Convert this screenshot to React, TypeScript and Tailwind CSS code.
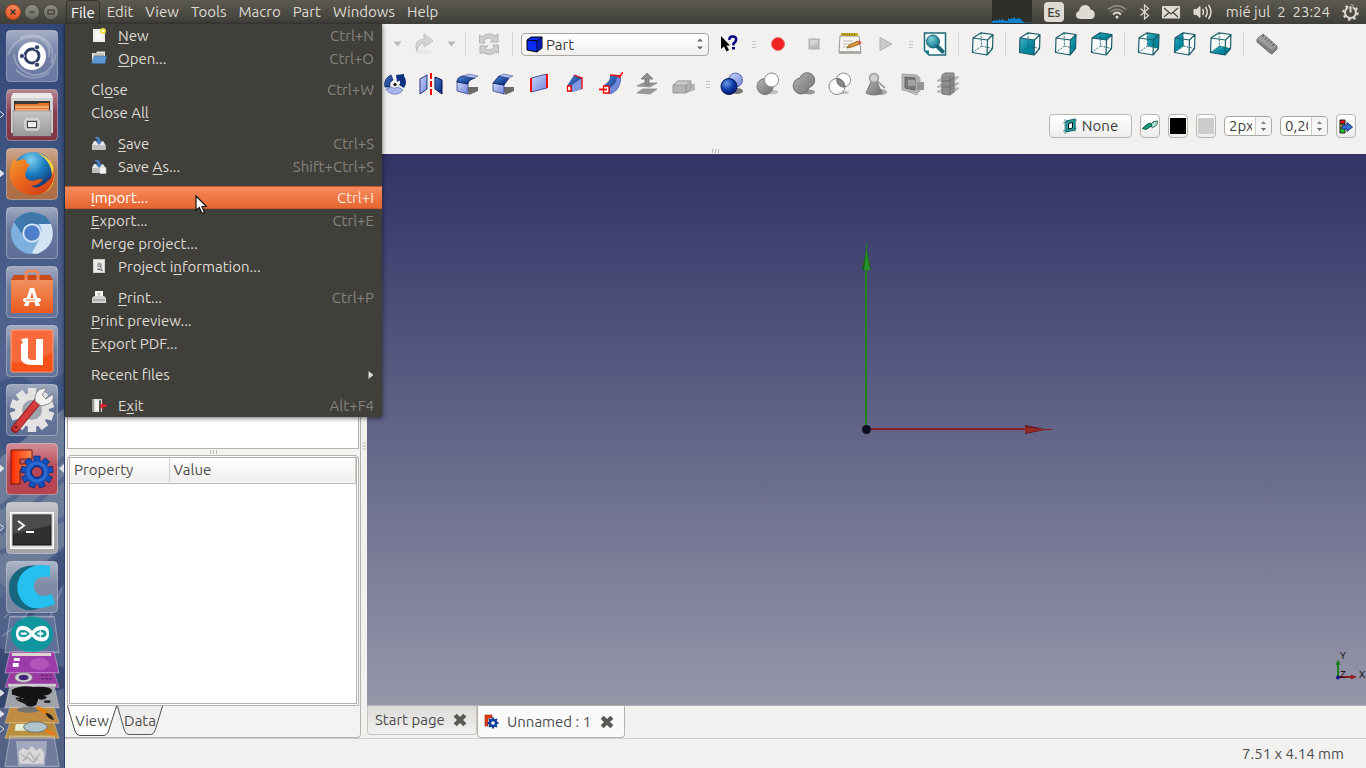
import React from "react";

type Face = "none" | "front" | "right" | "top" | "rear" | "left" | "bottom";

const Defs = () => (
  <svg className="absolute h-0 w-0" aria-hidden="true">
    <defs>
      <linearGradient id="tile" x1="0" y1="0" x2="0" y2="1">
        <stop offset="0" stopColor="#fff" stopOpacity=".42" />
        <stop offset=".45" stopColor="#fff" stopOpacity=".08" />
        <stop offset="1" stopColor="#fff" stopOpacity=".02" />
      </linearGradient>
      <linearGradient id="teal" x1="0" y1="0" x2="1" y2="1">
        <stop offset="0" stopColor="#45b0c0" />
        <stop offset=".6" stopColor="#0088a0" />
        <stop offset="1" stopColor="#00788e" />
      </linearGradient>
      <linearGradient id="blueDark" x1="0" y1="0" x2="1" y2="1">
        <stop offset="0" stopColor="#4f86d0" />
        <stop offset="1" stopColor="#00247c" />
      </linearGradient>
      <linearGradient id="blueLight" x1="0" y1="0" x2="1" y2="1">
        <stop offset="0" stopColor="#cbd6fb" />
        <stop offset="1" stopColor="#7286d8" />
      </linearGradient>
      <linearGradient id="gray" x1="0" y1="0" x2="1" y2="1">
        <stop offset="0" stopColor="#b8b8b8" />
        <stop offset="1" stopColor="#6e6e6e" />
      </linearGradient>
      <linearGradient id="silver" x1="0" y1="0" x2="0" y2="1">
        <stop offset="0" stopColor="#c4c4c4" />
        <stop offset="1" stopColor="#9a9a9a" />
      </linearGradient>
      <linearGradient id="orange" x1="0" y1="0" x2="0" y2="1">
        <stop offset="0" stopColor="#f0925f" />
        <stop offset="1" stopColor="#ec5a1e" />
      </linearGradient>
      <linearGradient id="freecadF" x1="0" y1="0" x2="1" y2="0">
        <stop offset="0" stopColor="#ff2a00" />
        <stop offset="1" stopColor="#ff8e50" />
      </linearGradient>
      <radialGradient id="ballBlue" cx=".35" cy=".3" r=".7">
        <stop offset="0" stopColor="#6c9ae8" />
        <stop offset=".6" stopColor="#0f3ba6" />
        <stop offset="1" stopColor="#001e78" />
      </radialGradient>
      <radialGradient id="globe" cx=".45" cy=".2" r=".8">
        <stop offset="0" stopColor="#7fd0f2" />
        <stop offset=".45" stopColor="#1a7dc0" />
        <stop offset="1" stopColor="#12235e" />
      </radialGradient>
      <linearGradient id="fox" x1="0" y1="0" x2="1" y2="1">
        <stop offset="0" stopColor="#f39a2c" />
        <stop offset=".5" stopColor="#e8601c" />
        <stop offset="1" stopColor="#cf3a12" />
      </linearGradient>
      <radialGradient id="ballTeal" cx=".35" cy=".3" r=".8">
        <stop offset="0" stopColor="#7fd3dc" />
        <stop offset="1" stopColor="#00697e" />
      </radialGradient>
    </defs>
  </svg>
);

/* ---------- launcher ---------- */

const Tile = ({ tint, label, left, right, children }: { tint: string; label: string; left?: "solid" | "open"; right?: boolean; children: React.ReactNode }) => (
  <button type="button" aria-label={label} className="relative flex h-[59px] w-full shrink-0 justify-center">
    <svg width="52" height="52" viewBox="0 0 52 52">
      <rect x=".5" y=".5" width="51" height="51" rx="4" fill={tint} />
      <rect x=".5" y=".5" width="51" height="51" rx="4" fill="url(#tile)" stroke="#fff" strokeOpacity=".35" />
      {children}
    </svg>
    {left && (
      <svg className="absolute left-0 top-5" width="6" height="12" viewBox="0 0 6 12">
        <path d="M-1 1.500 L4 5.500 L-1 9.500Z" fill={left === "solid" ? "#dfe1e6" : "none"} stroke="#dfe1e6" />
      </svg>
    )}
    {right && (
      <svg className="absolute right-0 top-5" width="6" height="12" viewBox="0 0 6 12">
        <path d="M6 1 L1 5.500 L6 10Z" fill="#dfe1e6" />
      </svg>
    )}
  </button>
);

const Gear = ({ cx, cy, r, fill, stroke, hole, holeFill, n = 8 }: { cx: number; cy: number; r: number; fill: string; stroke?: string; hole: number; holeFill: string; n?: number }) => (
  <g>
    {Array.from({ length: n }, (_, i) => (
      <rect key={i} x={cx - r * 0.19} y={cy - r} width={r * 0.38} height={r} fill={fill} stroke={stroke} strokeWidth=".6" transform={`rotate(${(i * 360) / n} ${cx} ${cy})`} />
    ))}
    <circle cx={cx} cy={cy} r={r * 0.77} fill={fill} />
    <circle cx={cx} cy={cy} r={hole} fill={holeFill} stroke={stroke} />
  </g>
);

const Folded = ({ label, h, tint, left, children }: { label: string; h: string; tint: string; left?: "solid" | "open"; children: React.ReactNode }) => (
  <button type="button" aria-label={label} className={`relative w-full shrink-0 ${h}`}>
    <svg className="h-full w-full overflow-visible" viewBox="0 0 65 20" preserveAspectRatio="none">
      <path d="M10 -2 L55 -2 L60 19 L5 19Z" fill={tint} stroke="#fff" strokeOpacity=".35" strokeWidth="1" />
      {children}
    </svg>
    {left && (
      <svg className="absolute left-0 top-0" width="6" height="10" viewBox="0 0 6 10">
        <path d="M-1 1 L4 5 L-1 9Z" fill={left === "solid" ? "#dfe1e6" : "none"} stroke="#dfe1e6" />
      </svg>
    )}
  </button>
);

const Launcher = () => (
  <nav aria-label="Launcher" className="relative flex w-[65px] shrink-0 flex-col overflow-hidden border-r border-[#29406f] bg-linear-to-b from-[#334878] from-0% via-[#53658f] via-45% to-[#2f3f68] pt-[6px]">
    <svg className="absolute bottom-0 left-0" width="65" height="400" viewBox="0 0 65 400" aria-hidden="true">
      <path d="M0 14 L20 6 L40 22 L65 4 V90 L45 70 L30 100 L0 80Z" fill="#3d5280" opacity=".7" />
      <path d="M0 90 L65 40 V180 L0 230Z" fill="#77869f" opacity=".8" />
      <path d="M0 140 L65 90 M0 165 L65 110 M0 185 L65 150 M10 225 L65 180" stroke="#465b86" strokeWidth="5" opacity=".6" />
      <path d="M0 215 L30 235 L18 262 L65 215 V300 L0 280Z" fill="#56688f" opacity=".8" />
      <path d="M4 250 q20 -20 32 -34 M2 268 q20 -12 36 -38 M50 250 l12 -30" stroke="#8997b0" strokeWidth="1.500" fill="none" opacity=".7" />
      <path d="M0 340 L65 320 V400 H0Z" fill="#7682a0" opacity=".5" />
    </svg>
    <Tile label="Dash" tint="#66759f">
      <path d="M2 25 Q9 5 32 7 Q45 12 43 27 M50 23 Q47 46 27 45 Q9 40 8 24 M14 8 Q31 1 42 12 Q49 22 45 33 M43 43 Q25 54 10 40" fill="none" stroke="#fff" strokeOpacity=".25" strokeWidth="2" />
      <circle cx="26" cy="26" r="14" fill="#fff" />
      <circle cx="26" cy="26" r="7" fill="none" stroke="#2e3f67" strokeWidth="3" />
      {[180, 60, -60].map((a) => (
        <circle key={a} cx={26 + 10 * Math.cos((a * Math.PI) / 180)} cy={26 + 10 * Math.sin((a * Math.PI) / 180)} r="2.500" fill="#2e3f67" stroke="#fff" strokeWidth=".8" />
      ))}
    </Tile>
    <Tile label="Files" tint="#7f2f42" left="open">
      <path d="M7 4 H45 L47 9 V44 H5 V9Z" fill="#d2d2d2" />
      <path d="M7 4 H45 L47 9 H5Z" fill="#e9e9e9" />
      <path d="M8 12 H44 V24 H8Z" fill="#3b3735" />
      <path d="M9 15 H31 L33 14 H43 V24 H9Z" fill="#e97430" />
      <path d="M9 18 H43 M9 21 H43" stroke="#fde0b8" />
      <path d="M7 22 H45 V47 H7Z" fill="url(#silver)" stroke="#8a8a8a" strokeWidth=".5" />
      <rect x="19" y="30" width="14" height="11" rx="2" fill="#b9b9b9" stroke="#eee" />
      <rect x="21.500" y="32.500" width="9" height="6" fill="#eee" stroke="#444" />
    </Tile>
    <Tile label="Firefox" tint="#ab6b40" left="solid">
      <circle cx="27" cy="24" r="20" fill="url(#globe)" />
      <path d="M31 5 Q45 12 46 27 Q44 39 34 46 Q50 42 48 23 Q46 9 31 5Z" fill="#ffd83b" />
      <path d="M8 10 Q9 13 11 13 Q16 10 20 12 Q20 16 24 17 Q21 20 20 23 Q17 31 26 33 Q32 31 37 31 Q33 38 25 38 Q32 43 44 31 Q47 28 47 20 Q51 35 39 44 Q29 50 17 45 Q2 38 4 22 Q5 16 8 10Z" fill="url(#fox)" />
    </Tile>
    <Tile label="Chromium" tint="#5b6b94">
      <circle cx="26" cy="26" r="21" fill="#7db0df" />
      <path d="M8 15 Q15 5 26 5 Q40 6 45 17 H26 Q17 18 16 27Z" fill="#3f78aa" />
      <path d="M45 17 Q52 38 31 47 L26 46 L35 29 Q37 22 33 17Z" fill="#d3e4f3" />
      <circle cx="26" cy="26" r="9.500" fill="#dce9f6" />
      <circle cx="26" cy="26" r="7.800" fill="#4d80c8" />
    </Tile>
    <Tile label="Software Center" tint="#606f95">
      <path d="M5 14 L8 9 H44 L47 14Z" fill="#c84e1b" />
      <path d="M5 14 H47 V47 H5Z" fill="url(#orange)" />
      <path d="M20 18 V8 Q20 5 23 5 H29 Q32 5 32 8 V18" fill="none" stroke="#ee8a61" strokeWidth="3" />
      <path d="M18 40 L24 22 H28 L34 40 H29.500 L28.500 36 H23.500 L22.500 40Z M24.300 32 H27.700 L26 26Z" fill="#fff" />
      <rect x="17" y="32" width="18" height="4" rx="2" fill="#fff" />
      <path d="M20 34 H29" stroke="#ec6c2e" />
    </Tile>
    <Tile label="Ubuntu One" tint="#627196">
      <rect x="5" y="5" width="42" height="42" rx="2" fill="#f75019" stroke="#ff9a69" />
      <path d="M5 5 H47 V27 Q25 40 5 37Z" fill="#fff" opacity=".15" />
      <path d="M15 14 L22 13 V32 Q22 35 26 35 H30 V14 H37 V40 H26 Q15 40 15 33 V19 L17 18Z" fill="#fff" />
    </Tile>
    <Tile label="System Settings" tint="#5c6c92">
      <Gear cx={26} cy={26} r={22} n={10} fill="#e2e2e2" hole={10} holeFill="#9ea4ad" />
      <path d="M9 45 L32 17" stroke="#8f1b20" strokeWidth="8" strokeLinecap="round" />
      <path d="M10 44 L32 17" stroke="#d53b3d" strokeWidth="6" strokeLinecap="round" />
      <path d="M29 17 Q28 6 38 4 L40 5 L36 11 L40 15 L47 10 Q49 19 39 21 L35 22Z" fill="#f1f1ef" stroke="#777" strokeWidth=".8" />
      <circle cx="10" cy="43" r="1.500" fill="#691114" />
    </Tile>
    <Tile label="FreeCAD" tint="#b53e4c" left="solid" right>
      <path d="M5 7 H26 V16 H14 V21 H21 V27 H14 V41 H5Z" fill="url(#freecadF)" stroke="#6b1608" strokeWidth="1" />
      <Gear cx={31} cy={29} r={16} n={9} fill="#1450bc" stroke="#021d61" hole={5.5} holeFill="#b84655" />
      <circle cx="31" cy="29" r="9" fill="none" stroke="#3f7ddc" strokeWidth="3" opacity=".6" />
    </Tile>
    <Tile label="Terminal" tint="#a0a0a6" left="open">
      <rect x="4.500" y="10.500" width="43" height="36" fill="#e0e0e0" stroke="#fff" />
      <rect x="7" y="13" width="38" height="30" fill="#303031" stroke="#151515" />
      <path d="M7 13 H45 V23 L7 32Z" fill="#666" opacity=".5" />
      <path d="M12 19 L18 23.500 L12 28" fill="none" stroke="#fff" strokeWidth="2" />
      <path d="M20 30 H28" stroke="#fff" strokeWidth="2" />
    </Tile>
    <Tile label="Cura" tint="#74829f">
      <path d="M33 5 Q12 2 4 19 Q-1 43 20 49 Q29 50 35 46 L29 35 Q19 39 16 30 Q17 12 30 16Z" fill="#17677f" />
      <path d="M44 5 Q25 1 15 14 Q7 27 16 40 Q26 53 49 43 L46 33 Q32 39 28 28 Q26 14 44 16Z" fill="#25bff0" />
    </Tile>
    <Folded label="Arduino" h="h-[34px]" tint="rgba(160,175,205,0.22)">
      <ellipse cx="32.500" cy="8.500" rx="21.500" ry="10.500" fill="#10969c" />
      <path d="M32.500 8 C27 3.500 17 3.500 17.500 8 C17 12.500 27 12.500 32.500 8 C38 3.500 49 3.500 48.500 8 C49 12.500 38 12.500 32.500 8Z" fill="none" stroke="#fff" strokeWidth="2.600" />
      <path d="M21 8 H27 M38 8 H44 M41 6.200 V9.800" stroke="#fff" strokeWidth="1.300" />
    </Folded>
    <Folded label="Workspace" h="h-[20px]" tint="#9c3cab">
      <path d="M12 -1 H52 V2 H12Z" fill="#ddd4ce" />
      <path d="M14 4 H20 V7 H14Z M13 9 H19 V13 H13Z" fill="#fff" />
      <ellipse cx="40" cy="10" rx="10" ry="6" fill="#d47ad2" opacity=".4" />
    </Folded>
    <Folded label="Screenshot" h="h-[14px]" tint="#9a3aa3">
      <ellipse cx="24" cy="5" rx="9" ry="7" fill="#cfcfcf" stroke="#777" />
      <ellipse cx="24" cy="5" rx="5" ry="4" fill="#43257c" />
      <path d="M8 16 H57" stroke="#c9c9cf" strokeWidth="4" />
      <path d="M42 2 h10 M42 7 h11" stroke="#602068" strokeWidth="2" strokeDasharray="3 1" />
    </Folded>
    <Folded label="Inkscape" h="h-[21px]" tint="#a1a3aa" left="solid">
      <path d="M12 2 Q20 -3 34 -1 Q53 -2 53 3 Q49 8 44 7 L48 9 Q42 13 39 10 L37 16 Q29 20 25 15 L17 12 L24 10 L12 6Z M45 12 h6 v2 h-6Z M16 9 h6 v2 h-6Z" fill="#141414" />
    </Folded>
    <Folded label="Gimp" h="h-[15px]" tint="#c08c42" left="solid">
      <ellipse cx="29" cy="1" rx="12" ry="4" fill="#737470" />
      <path d="M37 -2 Q43 0 48 7" stroke="#e8800d" strokeWidth="4" fill="none" />
      <path d="M46 5 Q53 6 55 15 Q48 13 46 5Z" fill="#202020" />
    </Folded>
    <Folded label="Image Viewer" h="h-[15px]" tint="#b98e3d" left="open">
      <path d="M16 0 H29 V9 H15Z" fill="#e5efd8" />
      <ellipse cx="36" cy="4" rx="12" ry="7" fill="#aec5cc" stroke="#666" />
      <path d="M46 8 L56 15" stroke="#e47c20" strokeWidth="5" />
    </Folded>
    <Folded label="Trash" h="h-[29px]" tint="rgba(180,190,215,0.3)">
      <path d="M17 2 H47 L45 18 H19Z" fill="#e7eaef" opacity=".4" stroke="#fff" />
      <path d="M19 9 l4 -3 5 2 4 -3 5 3 4 -2 4 4 -1 7 H20Z" fill="#d8d8da" />
      <path d="M21 10 l5 3 4 -4 5 5 6 -4 M23 15 l5 -2 6 3 5 -3" stroke="#aeaeb2" fill="none" />
    </Folded>
  </nav>
);

/* ---------- top panel ---------- */

const menus = ["File", "Edit", "View", "Tools", "Macro", "Part", "Windows", "Help"];
const load = [2, 2, 3, 2, 3, 3, 2, 4, 3, 3, 4, 3, 2, 3, 2, 2, 5, 4, 4, 5, 4, 5, 6, 4, 4, 5, 4, 5, 4, 3, 2, 1, 0, 1, 0, 0, 1, 0, 1, 0];

const TopPanel = () => (
  <header className="flex h-6 shrink-0 items-center bg-linear-to-b from-[#5c5a4f] to-[#3f3e39] text-[15px] text-[#dfdbd2]">
    <div className="flex w-[66px] shrink-0 items-center gap-[3px] pl-[5px]">
      {["close", "minimize", "maximize"].map((k) => (
        <button key={k} type="button" aria-label={k} className={k === "close" ? "flex size-4 items-center justify-center rounded-full border border-[#b04920] bg-linear-to-b from-[#f4885c] to-[#e8501c]" : "flex size-4 items-center justify-center rounded-full border border-[#4a4943] bg-linear-to-b from-[#8f8d83] to-[#6c6b63]"}>
          <svg width="10" height="10" viewBox="0 0 10 10" fill="none" stroke="#34312b">
            {k === "close" && <path d="M2.500 2.500 L7.500 7.500 M7.500 2.500 L2.500 7.500" strokeWidth="1.300" />}
            {k === "minimize" && <path d="M2 5 H8" />}
            {k === "maximize" && <rect x="2" y="3" width="6" height="4" />}
          </svg>
        </button>
      ))}
    </div>
    <nav className="flex h-full items-end" aria-label="Menu bar">
      {menus.map((m) => (
        <button key={m} type="button" className={m === "File" ? "mr-px h-6 rounded-t border border-b-0 border-[#34332f] bg-linear-to-b from-[#55534a] to-[#403f3a] px-1 leading-[23px] text-white" : "h-6 px-[6px]"}>
          {m}
        </button>
      ))}
    </nav>
    <div className="ml-auto flex h-full items-center gap-3 pr-[7px]">
      <svg width="40" height="24" viewBox="0 0 40 24" aria-label="System load">
        <rect width="40" height="24" fill="#2f2e2b" />
        {load.map((h, i) => (
          <rect key={i} x={i} y={23 - h} width="1" height={h} fill="#0d83cf" />
        ))}
      </svg>
      <button type="button" className="h-5 w-5 rounded-sm bg-[#dfdbd2] text-[13px] font-medium leading-5 text-[#3f3e39]">Es</button>
      <svg width="19" height="14" viewBox="0 0 19 14" fill="#dfdbd2">
        <path d="M4 14 Q0 13.500 0 10 Q0 7 3 6 Q4 0 9 0 Q13.500 0 14.500 4.500 Q18.500 5 18.800 9.500 Q18.500 14 14.500 14Z" />
      </svg>
      <svg width="20" height="14" viewBox="0 0 20 14" fill="none" strokeWidth="1.400">
        <path d="M1 4.500 Q10 -3 19 4.500" stroke="#8f8d84" />
        <path d="M3.500 7 Q10 1.500 16.500 7" stroke="#8f8d84" />
        <path d="M6 9.500 Q10 5.500 14 9.500" stroke="#dfdbd2" strokeWidth="2" />
        <circle cx="10" cy="12" r="1.500" fill="#dfdbd2" />
      </svg>
      <svg width="11" height="16" viewBox="0 0 11 16" fill="none" stroke="#dfdbd2" strokeWidth="1.200">
        <path d="M1.500 4.500 L9.500 11.500 L5.500 15 V1 L9.500 4.500 L1.500 11.500" />
      </svg>
      <svg width="19" height="13" viewBox="0 0 19 13">
        <rect width="18" height="12.500" rx="1" fill="#dfdbd2" />
        <path d="M2 2 L9 8 L16 2 M2 11 L7 6.500 M16 11 L11 6.500" fill="none" stroke="#45443e" strokeWidth="1.200" />
      </svg>
      <svg width="21" height="16" viewBox="0 0 21 16" fill="none" stroke="#dfdbd2" strokeWidth="1.500">
        <path d="M1 5.500 H3.500 L7 2.500 V13.500 L3.500 10.500 H1Z" fill="#dfdbd2" strokeWidth="1" />
        <path d="M9.500 5 Q11.500 8 9.500 11 M12.500 3 Q16 8 12.500 13 M15.500 1 Q20.500 8 15.500 15" />
      </svg>
      <span className="whitespace-pre">mié jul  2  23:24</span>
      <svg width="17" height="17" viewBox="0 0 17 17" fill="none" stroke="#dfdbd2">
        <circle cx="8.500" cy="8.500" r="5.500" strokeWidth="2" />
        <circle cx="8.500" cy="8.500" r="7.200" strokeWidth="2" strokeDasharray="2.600 3.050" />
        <path d="M8.500 1 V8.500" stroke="#4c4b44" strokeWidth="4" />
        <path d="M8.500 2 V8.500" strokeWidth="2" />
      </svg>
    </div>
  </header>
);

/* ---------- file menu ---------- */

const drive = (
  <>
    <path d="M1 9 L3 5 H12 L14.500 9 V14 H1Z" fill="#e7e7e6" />
    <path d="M1 9 H14.500 V14 H1Z" fill="#bfc0c0" />
    <path d="M3 1.500 Q9 -1 9.500 5 H11.500 L8 9 L4.500 5 H6.500 Q6 2 3 1.500Z" fill="#4878b8" />
  </>
);

const menuIcons: Record<string, React.ReactNode> = {
  new: (
    <>
      <path d="M2 1 H14 V14 H2Z" fill="#eeedeb" />
      <path d="M4 3 H12 V12 H4Z" fill="#f7f7f6" />
      <circle cx="12" cy="3" r="3" fill="#e9e13a" />
      <circle cx="12" cy="3" r="1.300" fill="#fffde0" />
    </>
  ),
  open: (
    <>
      <path d="M1 2 H5 L6 .5 H14 V12 H1Z" fill="#e2e2e0" />
      <path d="M3 3 H13 M3 4.500 H13" stroke="#8d8d8b" strokeWidth=".7" />
      <path d="M1 12.500 L3 5.500 H15.500 L14 12.500Z" fill="#5f97d2" stroke="#3d6ba5" strokeWidth=".6" />
    </>
  ),
  save: drive,
  saveas: (
    <>
      {drive}
      <path d="M9 8.500 H15 V14.500 H9Z" fill="#f4f4f3" stroke="#cfcfcd" strokeWidth=".6" />
    </>
  ),
  info: (
    <>
      <rect x="2.500" y=".5" width="11" height="13" fill="#ecebe8" stroke="#d1cfca" />
      <circle cx="8.500" cy="6" r="2.500" fill="#a1a1a0" />
      <path d="M6 10 H9 L12 12 M9 7 L11 10" stroke="#777" />
    </>
  ),
  print: (
    <>
      <path d="M4 1 H12 V8 H4Z" fill="#f8f8f7" />
      <path d="M8 2.500 V7 M6.500 4 H9.500" stroke="#aaa" />
      <path d="M1 8 L3 6 H13 L15 8 V13 H1Z" fill="#d1d1cf" />
      <path d="M2 10 H14" stroke="#888" />
    </>
  ),
  exit: (
    <>
      <path d="M1 1 H11 V14 H1Z" fill="#d8d8d5" />
      <path d="M1 1 H3 V14 H1Z" fill="#999" />
      <path d="M4 1 L8 3 V14 L4 12Z" fill="#f1f1ef" />
      <path d="M8 3 L10 1.500 V14 H8Z" fill="#555" />
      <path d="M8.500 8 L12 4.500 V6.500 H15.500 V9 H12 V11.500Z" fill="#df2424" />
    </>
  ),
};

type Item = { pre?: string; key?: string; post: string; sc?: string; icon?: string; hot?: boolean; sub?: boolean };
const groups: Item[][] = [
  [
    { key: "N", post: "ew", sc: "Ctrl+N", icon: "new" },
    { key: "O", post: "pen...", sc: "Ctrl+O", icon: "open" },
  ],
  [
    { pre: "Cl", key: "o", post: "se", sc: "Ctrl+W" },
    { pre: "Close Al", key: "l", post: "" },
  ],
  [
    { key: "S", post: "ave", sc: "Ctrl+S", icon: "save" },
    { pre: "Save ", key: "A", post: "s...", sc: "Shift+Ctrl+S", icon: "saveas" },
  ],
  [
    { key: "I", post: "mport...", sc: "Ctrl+I", hot: true },
    { key: "E", post: "xport...", sc: "Ctrl+E" },
    { post: "Merge project..." },
    { pre: "Project i", key: "n", post: "formation...", icon: "info" },
  ],
  [
    { key: "P", post: "rint...", sc: "Ctrl+P", icon: "print" },
    { key: "P", post: "rint preview..." },
    { key: "E", post: "xport PDF..." },
  ],
  [{ post: "Recent files", sub: true }],
  [{ pre: "E", key: "x", post: "it", sc: "Alt+F4", icon: "exit" }],
];

const FileMenu = () => (
  <div role="menu" className="absolute left-0 top-0 z-10 flex w-[317px] flex-col gap-2 bg-[#403f3a] text-[15px] text-[#dfdbd2] shadow-[0_1px_5px_rgba(0,0,0,0.6)]">
    {groups.map((g, gi) => (
      <div key={gi} className="flex flex-col">
        {g.map((it, i) => (
          <button
            key={i}
            type="button"
            role="menuitem"
            className={
              it.hot
                ? "flex h-[23px] items-center border-y border-[#c75a2c] bg-linear-to-b from-[#f88a5d] to-[#e5662f] pl-[26px] pr-2 text-left text-white"
                : "flex h-[23px] items-center pl-[26px] pr-2 text-left"
            }
          >
            {it.icon && (
              <svg className="mr-[11px]" width="16" height="16" viewBox="0 0 16 16">
                {menuIcons[it.icon]}
              </svg>
            )}
            <span>
              {it.pre}
              {it.key && <span className="underline underline-offset-2">{it.key}</span>}
              {it.post}
            </span>
            {it.sc && <span className={it.hot ? "ml-auto text-[#fbe3d8]" : "ml-auto text-[#85837c]"}>{it.sc}</span>}
            {it.sub && (
              <svg className="ml-auto" width="6" height="8" viewBox="0 0 6 8">
                <path d="M.5 0 L5.500 4 L.5 8Z" fill="#dfdbd2" />
              </svg>
            )}
          </button>
        ))}
      </div>
    ))}
    <svg className="pointer-events-none absolute left-[130px] top-[171px]" width="14" height="20" viewBox="0 0 14 20" aria-hidden="true">
      <path d="M1 1 V15.500 L4.300 12.500 L7 18.500 L9.500 17.400 L7 11.500 H11.500Z" fill="#fff" stroke="#111" strokeWidth="1.200" />
    </svg>
  </div>
);

/* ---------- toolbars ---------- */

const facePoints: Record<Face, string> = {
  none: "",
  front: "3,6 17.500,8 17,23 2.500,20.500",
  right: "17.500,8 23,2.500 22.500,16.500 17,23",
  top: "3,6 11,.8 23,2.500 17.500,8",
  rear: "11,.8 23,2.500 22.500,16.500 11.500,14",
  left: "3,6 11,.8 11.500,14 2.500,20.500",
  bottom: "2.500,20.500 11.500,14 22.500,16.500 17,23",
};

const Cube = ({ face }: { face: Face }) => (
  <>
    <path d="M3 6 L11 .8 L23 2.500 L22.500 16.500 L17 23 L2.500 20.500Z" fill="#f8fafa" />
    {face !== "none" && <polygon points={facePoints[face]} fill="url(#teal)" />}
    <g fill="none" stroke="#1b5d6b">
      <path d="M11 1 L11.500 14 L2.500 20.500 M11.500 14 L22.500 16.500" strokeDasharray="2 1.200" strokeWidth=".9" />
      <path d="M3 6 L11 .8 L23 2.500 L22.500 16.500 L17 23 L2.500 20.500Z M3 6 L17.500 8 L23 2.500 M17.500 8 L17 23" strokeWidth="1.200" strokeLinejoin="round" />
    </g>
  </>
);

const Tool = ({ label, children }: { label: string; children: React.ReactNode }) => (
  <button type="button" aria-label={label} className="flex h-9 w-9 shrink-0 items-center justify-center">
    <svg width="24" height="24" viewBox="0 0 24 24">
      {children}
    </svg>
  </button>
);
const Sep = () => (
  <div className="flex w-[11px] shrink-0 justify-center">
    <div className="h-6 w-px bg-[#d9d6d3]" />
  </div>
);
const Grip = () => (
  <div className="flex w-[13px] shrink-0 flex-col items-center gap-0.5">
    <div className="h-px w-1 bg-[#c9c7c4]" />
    <div className="h-px w-1 bg-[#c9c7c4]" />
    <div className="h-px w-1 bg-[#c9c7c4]" />
  </div>
);
const HGrip = () => (
  <div className="flex gap-0.5">
    <div className="h-1 w-px bg-[#bdbab6]" />
    <div className="h-1 w-px bg-[#bdbab6]" />
    <div className="h-1 w-px bg-[#bdbab6]" />
  </div>
);
const Drop = () => (
  <button type="button" aria-label="History" className="flex w-[18px] shrink-0 justify-center">
    <svg width="9" height="6" viewBox="0 0 9 6">
      <path d="M.5 .5 H8.500 L4.500 5.500Z" fill="#b9b7b4" />
    </svg>
  </button>
);

const Spin = ({ value, label }: { value: string; label: string }) => (
  <div className="flex h-5 w-12 overflow-hidden rounded border border-[#aaa6a1] bg-white">
    <input aria-label={label} defaultValue={value} className="ml-1 mr-[3px] w-[23px] min-w-0 text-[15px] leading-[18px] outline-none" />
    <div className="flex w-4 flex-col items-center justify-between border-l border-[#d2cfcb] bg-[#f6f5f4] py-1">
      <button type="button" aria-label={`${label} up`}>
        <svg className="block" width="5" height="3" viewBox="0 0 5 3"><path d="M0 3 L2.500 0 L5 3Z" fill="#8b8a87" /></svg>
      </button>
      <button type="button" aria-label={`${label} down`}>
        <svg className="block" width="5" height="3" viewBox="0 0 5 3"><path d="M0 0 H5 L2.500 3Z" fill="#6b6a67" /></svg>
      </button>
    </div>
  </div>
);

const small = "flex h-6 w-5 items-center justify-center rounded border border-[#b9b5b0] bg-linear-to-b from-white to-[#eeedeb]";

const Toolbars = () => (
  <div className="flex shrink-0 flex-col bg-[#f2f1f0]">
    <div className="flex h-10 items-center overflow-hidden pl-[323px]">
      <Drop />
      <Tool label="Redo">
        <ellipse cx="12" cy="20" rx="9" ry="2.500" fill="#e9e8e6" />
        <path d="M5 19 Q1 8 12 7 V2 L21 9 L12 15 V11 Q7 11 5 19Z" fill="#d5d4d2" stroke="#c2c1bf" />
      </Tool>
      <Drop />
      <Sep />
      <Tool label="Refresh">
        <ellipse cx="13" cy="20" rx="9" ry="3" fill="#dddbd9" />
        <path d="M2.500 11 V3 L5 5 Q12 -1 18 4 L21 2 V10 H13 L16 7.500 Q11 4 7 8.500 L8 11Z" fill="#d0cfcd" stroke="#b3b2b0" />
        <path d="M21.500 13 V21 L19 19 Q12 25 6 20 L3 22 V14 H11 L8 16.500 Q13 20 17 15.500 L16 13Z" fill="#d0cfcd" stroke="#b3b2b0" />
      </Tool>
      <Sep />
      <div className="relative ml-[3px] mr-[2px] flex h-6 w-[188px] shrink-0 items-center">
        <select aria-label="Workbench" className="h-[23px] w-full appearance-none rounded border border-[#aaa6a1] bg-linear-to-b from-white to-[#f1f0ee] pl-6 text-[15px] leading-none text-[#3c3c3c]">
          <option>Part</option>
        </select>
        <svg className="pointer-events-none absolute left-[5px]" width="17" height="17" viewBox="0 0 17 17">
          <path d="M1 4 L5 1 H16 V12 L11 16 L1 14Z" fill="#0a2bf5" stroke="#000" />
          <path d="M1 4 L11 5 L16 1 M11 5 V16" fill="none" stroke="#000" />
          <path d="M11.500 5.500 L15.500 2 V11.500 L11.500 15Z" fill="#071aa8" />
        </svg>
        <svg className="pointer-events-none absolute right-1.5" width="6" height="12" viewBox="0 0 6 12">
          <path d="M0 3.500 L3 .5 L6 3.500Z M0 8.500 H6 L3 11.500Z" fill="#6b6a67" />
        </svg>
      </div>
      <Tool label="What's This">
        <path d="M4 4 V17 L7 14.500 L9.500 19.500 L12 18 L9.500 13.500 H13Z" fill="#000" />
        <path d="M12.500 8 Q12 4.500 15.500 4.500 Q20 4.500 19 8.500 Q18.500 10 16.500 11.500 V13.500" fill="none" stroke="#000080" strokeWidth="2.500" />
        <rect x="15" y="15" width="3" height="2.500" fill="#000080" />
      </Tool>
      <Grip />
      <Tool label="Record macro"><circle cx="12" cy="12" r="6.500" fill="#ee2222" stroke="#f06a6a" /></Tool>
      <Tool label="Stop recording">
        <rect x="7" y="7" width="10" height="10" fill="#bdbcba" stroke="#b0afad" />
        <path d="M8 8 H16 V11 L8 14Z" fill="#d4d3d1" />
      </Tool>
      <Tool label="Macros">
        <path d="M2 4 H21 L23 21 H1Z" fill="#f7f6f2" stroke="#999" />
        <path d="M1 19 H23 V22 H1Z" fill="#aaa9a5" />
        <path d="M3 1 H20 V4 H3Z" fill="#c4ad25" />
        <path d="M4 1 V4 M6.500 1 V4 M9 1 V4 M11.500 1 V4 M14 1 V4 M16.500 1 V4" stroke="#8c7d18" />
        <path d="M5 9 H15 M5 12 H12 M5 15 H10" stroke="#bcbab5" />
        <path d="M9 16 L11 13 L20 9 L22 12 L12 15.500Z" fill="#df9b3e" stroke="#815112" strokeWidth=".8" />
        <path d="M20 9 L22 8.500 L23.500 11 L22 12Z" fill="#d8484d" />
      </Tool>
      <Tool label="Execute macro"><path d="M6 5.500 L18 12 L6 18.500Z" fill="#cbcac8" stroke="#b3b2b0" /></Tool>
      <Grip />
      <Tool label="Fit all">
        <path d="M1.500 1 H22.500 V23 H6 L1.500 18.500Z" fill="#fff" stroke="#1b6877" strokeWidth="1.500" />
        <path d="M1.500 18.500 H6 V23Z" fill="#0f7b90" />
        <path d="M13 13 L19.500 19.500" stroke="#1b6877" strokeWidth="4" strokeLinecap="round" />
        <circle cx="10" cy="9.500" r="6.500" fill="url(#ballTeal)" stroke="#14606e" />
      </Tool>
      <Sep />
      <Tool label="Axonometric"><Cube face="none" /></Tool>
      <Sep />
      <Tool label="Front"><Cube face="front" /></Tool>
      <Tool label="Right"><Cube face="right" /></Tool>
      <Tool label="Top"><Cube face="top" /></Tool>
      <Sep />
      <Tool label="Rear"><Cube face="rear" /></Tool>
      <Tool label="Left"><Cube face="left" /></Tool>
      <Tool label="Bottom"><Cube face="bottom" /></Tool>
      <Sep />
      <Tool label="Measure">
        <path d="M2 7 L8 2 L22 14 V17 L17 22 L15 21 L2 10Z" fill="#808080" stroke="#707070" />
        <path d="M2 7 L8 2 L22 14 L17 18Z" fill="#9c9c9c" />
        <path d="M9 3 L7.500 5 M11.500 5.500 L10 7.500 M14 7.500 L12.500 9.500 M16.500 9.500 L15 11.500 M19 12 L17.500 14" stroke="#4a4a4a" />
      </Tool>
    </div>
    <div className="flex h-10 items-center overflow-hidden pl-[312px]">
      <Tool label="Revolve">
        <path d="M8 3 A10 10 0 0 0 2 15 L7 15 A6 6 0 0 1 10 8Z" fill="url(#blueDark)" stroke="#0d2160" strokeWidth=".8" />
        <path d="M3 17 A10 10 0 0 0 20 18 L15 15 A6 6 0 0 1 8 15Z" fill="#a8b6ec" stroke="#4a5aa0" strokeWidth=".6" />
        <path d="M13 3 L21 2 V4 Q25 10 21 16 L16 13 Q18 11 16.500 8.500 L14 10Z" fill="#0d3083" />
        <circle cx="12" cy="12.500" r="1.500" fill="#000" />
      </Tool>
      <Tool label="Mirror">
        <path d="M1 7 L8 3 V17 L1 22Z" fill="url(#blueLight)" stroke="#26357d" />
        <path d="M16 5 L23 8 V22 L16 17Z" fill="url(#blueDark)" stroke="#001450" />
        <path d="M12 1 V24" stroke="#f00" strokeWidth="2" strokeDasharray="6 2" />
      </Tool>
      <Tool label="Fillet">
        <path d="M12 15 L23 15 V19 L14 23Z" fill="#6d6b69" />
        <path d="M2 9 L13 12 V22 L2 19Z" fill="url(#blueLight)" stroke="#33458f" strokeWidth=".8" />
        <path d="M2 10 Q2 5 8 4 L20 6 Q13 8 13 12Z" fill="url(#blueDark)" stroke="#001450" strokeWidth=".8" />
        <path d="M8 4 L14 2 L23 4 L19 6Z" fill="#b2bff1" stroke="#4056a0" strokeWidth=".6" />
      </Tool>
      <Tool label="Chamfer">
        <path d="M12 15 L23 15 V19 L14 23Z" fill="#6d6b69" />
        <path d="M2 11 L13 13 V22 L2 19Z" fill="url(#blueLight)" stroke="#33458f" strokeWidth=".8" />
        <path d="M2 11 L8 4 L18 6 L13 13Z" fill="url(#blueDark)" stroke="#001450" strokeWidth=".8" />
        <path d="M8 4 L13 2 L22 4 L18 6Z" fill="#b2bff1" stroke="#4056a0" strokeWidth=".6" />
      </Tool>
      <Tool label="Ruled surface">
        <path d="M4 6 L20 2 V16 L4 20Z" fill="url(#blueLight)" stroke="#26357d" strokeWidth=".8" />
        <path d="M4 6 V20 M20 2 V16" stroke="#f00" strokeWidth="1.800" />
      </Tool>
      <Tool label="Loft">
        <path d="M4 14 L11 3 L19 6 V17 L9 20 L4 19Z" fill="url(#blueDark)" />
        <path d="M9 13 L19 6 V17 L9 20Z" fill="#7f9ae0" />
        <path d="M11 3 L19 6 V17" fill="none" stroke="#f00" strokeWidth="1.300" />
        <path d="M4.500 14 H8 V19 H4.500Z" fill="#fff" stroke="#f00" strokeWidth="1.300" />
      </Tool>
      <Tool label="Sweep">
        <path d="M5 13 Q11 10 11 4 L22 3 Q23 17 12 22 L6 21Z" fill="url(#blueDark)" />
        <path d="M11 16 Q18 11 18 5 L22 4 Q22 18 11 22Z" fill="#7387d8" />
        <path d="M11 3 L22 4 M20 6 L24 0" fill="none" stroke="#f00" strokeWidth="1.500" />
        <path d="M4.500 14 H10 V21 H4.500Z" fill="#fff" stroke="#f00" strokeWidth="1.300" />
        <path d="M0 17.500 H8" stroke="#f00" strokeWidth="1.800" />
      </Tool>
      <Tool label="Offset">
        <path d="M2 21 L8 17 H22 L15 22Z M2 14 L8 11 H22 L15 15Z" fill="#9a9a9a" stroke="#777" strokeWidth=".6" />
        <path d="M12 1 L18 7 H14 V13 H10 V7 H6Z" fill="#8e8e8e" stroke="#777" strokeWidth=".8" />
      </Tool>
      <Tool label="Thickness">
        <path d="M14 12 H24 V18 L16 21Z" fill="#b9b7b5" />
        <path d="M2 13 L7 9 H20 V16 L15 21 H2Z" fill="#b3b3b3" stroke="#8a8a8a" strokeWidth=".8" />
        <path d="M2 13 L7 9 H20 L15 13Z" fill="#cbcbcb" stroke="#909090" strokeWidth=".6" />
        <path d="M15 13 V21" stroke="#8f8f8f" />
      </Tool>
      <Grip />
      <Tool label="Boolean">
        <ellipse cx="17" cy="19" rx="6" ry="3" fill="#7b7976" />
        <circle cx="15.500" cy="8" r="7" fill="url(#blueLight)" stroke="#3b4da8" strokeWidth=".8" />
        <circle cx="9" cy="14.500" r="8" fill="url(#ballBlue)" stroke="#011552" />
      </Tool>
      <Tool label="Cut">
        <ellipse cx="16" cy="20" rx="6" ry="2.500" fill="#c3c1be" />
        <circle cx="9" cy="14.500" r="8" fill="url(#gray)" stroke="#777" />
        <circle cx="15.500" cy="8" r="7" fill="#fff" stroke="#888" />
      </Tool>
      <Tool label="Union">
        <ellipse cx="17" cy="20" rx="6" ry="2.500" fill="#999794" />
        <path d="M8 6 A7.500 7.500 0 1 1 17 15.500 A8 8 0 1 1 8 6Z" fill="url(#gray)" stroke="#6c6c6c" />
      </Tool>
      <Tool label="Intersection">
        <ellipse cx="15" cy="20.500" rx="6" ry="1.500" fill="#b5b3b0" />
        <circle cx="15.500" cy="8" r="7" fill="#fff" stroke="#888" />
        <circle cx="9" cy="14.500" r="8" fill="#fff" fillOpacity=".8" stroke="#888" />
        <path d="M9 6.500 A8 8 0 0 1 16.500 15 A7 7 0 0 1 9 6.500Z" fill="#8a8a8a" stroke="#666" />
      </Tool>
      <Tool label="Check geometry">
        <ellipse cx="17" cy="20" rx="6" ry="3" fill="#aaa8a5" />
        <path d="M11 6 L18 21 Q10 25 2 21 L7 10Z" fill="url(#gray)" stroke="#777" />
        <circle cx="10" cy="6" r="4.500" fill="#d1d1d1" stroke="#999" strokeWidth="1.500" />
        <path d="M13 9 L21 16" stroke="#888" strokeWidth="1.500" />
      </Tool>
      <Tool label="Section">
        <path d="M2 2 L17 3 L20 6 V19 L17 21 L2 18Z" fill="#b8b8b8" stroke="#999" strokeWidth=".8" />
        <path d="M5 5 L15 6 V18 L5 16Z" fill="#777" stroke="#666" />
        <path d="M8 8 H15 V14 H8Z" fill="#a1a1a1" />
        <path d="M17 3 V23 L9 20" fill="none" stroke="#a5a5a5" />
        <path d="M17 10 H24 V18 H17Z" fill="#949494" />
      </Tool>
      <Tool label="Cross-sections">
        <path d="M1 9 L7 5 H23 L17 10Z M1 15 L7 11 H23 L17 16Z M1 20 L7 16 H23 L17 21Z" fill="#c4c4c4" stroke="#999" strokeWidth=".7" />
        <path d="M6 3 L9 1 H18 V20 L14 23 L6 22Z" fill="#858585" stroke="#777" fillOpacity=".85" />
        <path d="M6 9 H14 L18 6 M6 15 H14 L18 12 M14 4 V23" stroke="#6a6a6a" fill="none" />
      </Tool>
    </div>
    <div className="flex h-11 items-center justify-end gap-2 pr-[10px] text-[15px] text-[#3c3c3c]">
      <button type="button" className="flex h-6 w-[83px] items-center justify-center gap-1 rounded border border-[#b9b5b0] bg-linear-to-b from-white to-[#eeedeb]">
        <svg width="15" height="16" viewBox="0 0 15 16">
          <path d="M3 3 L12 1 V12 L3 14Z" fill="#31b0b4" stroke="#0b5a60" />
          <path d="M5.500 5.500 L9.500 4.500 V10 L5.500 11Z" fill="#fff" stroke="#111" />
          <path d="M0 5 L14 2 M0 13 L14 10 M2 1 V16 M12 0 V14" stroke="#16777d" strokeWidth=".7" />
        </svg>
        None
      </button>
      <button type="button" aria-label="Construction mode" className={small}>
        <svg width="16" height="12" viewBox="0 0 16 12">
          <path d="M7 7 L11 2 L15.500 1 L15 4.500 L10.500 8 L9 6Z" fill="#aee3d3" stroke="#25705f" />
          <path d="M.5 8.500 Q4 4 8.500 3 L10 5.500 L4 9.500Z" fill="#159a7d" stroke="#0d5a4a" />
        </svg>
      </button>
      <button type="button" aria-label="Line color" className={small}><span className="size-4 bg-black" /></button>
      <button type="button" aria-label="Face color" className={small}><span className="size-4 bg-[#cccccc]" /></button>
      <Spin label="Line width" value="2px" />
      <Spin label="Text size" value="0,20" />
      <button type="button" aria-label="Apply style" className={small}>
        <svg width="14" height="15" viewBox="0 0 14 15">
          <path d="M1 1 H6 V5 H1Z" fill="#e11" stroke="#222" />
          <path d="M1 5 H6 V9 H1Z" fill="#e6e01a" stroke="#222" />
          <path d="M1 9 H6 V14 H1Z" fill="#1fc41f" stroke="#222" />
          <path d="M3 6 H8 V3.500 L13.500 8 L8 12.500 V10 H3Z" fill="#3b6fd4" stroke="#16347c" />
        </svg>
      </button>
    </div>
    <div className="flex h-1.5 items-start justify-center pt-px">
      <HGrip />
    </div>
  </div>
);

/* ---------- workspace ---------- */

const SideTab = ({ label, active }: { label: string; active?: boolean }) => (
  <button type="button" className={active ? "relative h-[30px] w-[50px] text-center" : "relative h-[29px] w-[46px] text-center"}>
    <svg className="absolute inset-0 h-full w-full" viewBox="0 0 50 30" preserveAspectRatio="none" aria-hidden="true">
      <path d="M.5 0 L8 25 Q9.500 29.500 13 29.500 H36 Q40 29.500 41.500 25 L49.500 0" fill={active ? "#fff" : "#efeeed"} stroke="#4a4a48" />
    </svg>
    <span className="relative">{label}</span>
  </button>
);

const SidePanel = () => (
  <aside className="flex w-[296px] shrink-0 flex-col rounded-br border-b border-r border-[#b5b1ac] bg-[#f4f3f2] pl-[2px] pr-[1px] text-[15px] text-[#4c4c4c]">
    <div className="h-[295px] shrink-0 border border-[#b5b1ac] bg-white" />
    <div className="flex h-[6px] shrink-0 items-center justify-center"><HGrip /></div>
    <div className="flex min-h-0 flex-1 rounded-t border border-[#b5b1ac] bg-white p-px">
      <div className="flex-1 border border-[#b5b1ac]">
        <table className="w-full table-fixed border-collapse">
          <thead>
            <tr className="h-[25px] border-b border-[#b5b1ac] bg-linear-to-b from-white to-[#efeeec]">
              <th className="w-[99px] border-r border-[#d2cfcb] pl-1 text-left font-normal">Property</th>
              <th className="border-r border-[#d2cfcb] pl-1 text-left font-normal">Value</th>
            </tr>
          </thead>
        </table>
      </div>
    </div>
    <div className="flex h-[31px] shrink-0">
      <SideTab label="View" active />
      <SideTab label="Data" />
    </div>
  </aside>
);

const CloseX = () => (
  <svg width="14" height="14" viewBox="0 0 13 13">
    <path d="M2 2 L11 11 M11 2 L2 11" stroke="#5a5955" strokeWidth="4" />
  </svg>
);

const Viewport = () => (
  <section className="flex min-w-0 flex-1 flex-col">
    <div className="relative flex min-h-0 flex-1 items-center justify-center overflow-hidden bg-linear-to-b from-[#333365] to-[#9797aa]">
      <svg className="shrink-0" width="400" height="400" viewBox="1 1 400 400" aria-label="Axis cross">
        <path d="M200 200 V41" stroke="#218221" strokeWidth="2" />
        <path d="M200.500 14 V28" stroke="#218221" />
        <path d="M200.500 19 L205 41 H196Z" fill="#176017" />
        <path d="M200.500 19 L204 41 H198Z" fill="#279027" />
        <path d="M200 200 H360" stroke="#852121" strokeWidth="2" />
        <path d="M370 200.500 H386" stroke="#852121" />
        <path d="M359 196 L381 200.500 L359 205Z" fill="#5c1717" />
        <path d="M359 198 L381 200.500 L359 204Z" fill="#932727" />
        <circle cx="200.500" cy="200.500" r="4.500" fill="#0d0d22" />
      </svg>
      <svg className="absolute bottom-5 right-0" width="34" height="36" viewBox="0 0 34 36" aria-label="Orientation">
        <path d="M6 28 V14" stroke="#1c7f1c" strokeWidth="2" />
        <path d="M6 10 L8.500 16 H3.500Z" fill="#1c7f1c" />
        <path d="M6 28 H20" stroke="#8b1f1f" strokeWidth="2" />
        <path d="M25 28 L19 25.500 V30.500Z" fill="#8b1f1f" />
        <circle cx="6" cy="28.500" r="2" fill="#1b1b86" />
        <text x="8" y="10" fontSize="10" fill="#000">Y</text>
        <text x="8" y="29" fontSize="10" fill="#000">Z</text>
        <text x="27" y="29" fontSize="10" fill="#000">X</text>
      </svg>
    </div>
    <div className="flex h-[33px] shrink-0 items-start border-t border-[#b5b1ac] text-[15px] text-[#4c4c4c]">
      <button type="button" className="flex h-[29px] w-[110px] items-center gap-2 rounded-b border border-t-0 border-[#c8c5c1] bg-linear-to-b from-[#dedbd8] to-[#f2f1f0] pl-[7px]">
        Start page <CloseX />
      </button>
      <button type="button" className="flex h-8 w-[148px] items-center rounded-b border border-t-0 border-[#b5b1ac] bg-[#fafafa] pl-1.5">
        <svg className="mr-2" width="15" height="15" viewBox="0 0 15 15">
          <path d="M1 1 H8 V4 H4 V12 H1Z" fill="#ee3b12" stroke="#7b1d0b" strokeWidth=".6" />
          <Gear cx={9} cy={9} r={5.5} fill="#123f9c" hole={1.8} holeFill="#fff" />
        </svg>
        Unnamed : 1
        <span className="ml-auto mr-[10px]"><CloseX /></span>
      </button>
    </div>
  </section>
);

export default function App() {
  return (
    <div className="flex h-screen flex-col overflow-hidden bg-[#f2f1f0] font-['Ubuntu','Noto_Sans',sans-serif] leading-5">
      <Defs />
      <TopPanel />
      <div className="flex min-h-0 flex-1">
        <Launcher />
        <main className="relative flex min-w-0 flex-1 flex-col">
          <FileMenu />
          <Toolbars />
          <div className="flex min-h-0 flex-1">
            <SidePanel />
            <div className="flex w-1.5 shrink-0 items-center justify-center"><div className="rotate-90"><HGrip /></div></div>
            <Viewport />
          </div>
          <footer className="flex h-[30px] shrink-0 items-center justify-end border-t border-[#d2cfcb] pr-[22px] text-[15px] text-[#4c4c4c]">7.51 x 4.14 mm</footer>
        </main>
      </div>
    </div>
  );
}
